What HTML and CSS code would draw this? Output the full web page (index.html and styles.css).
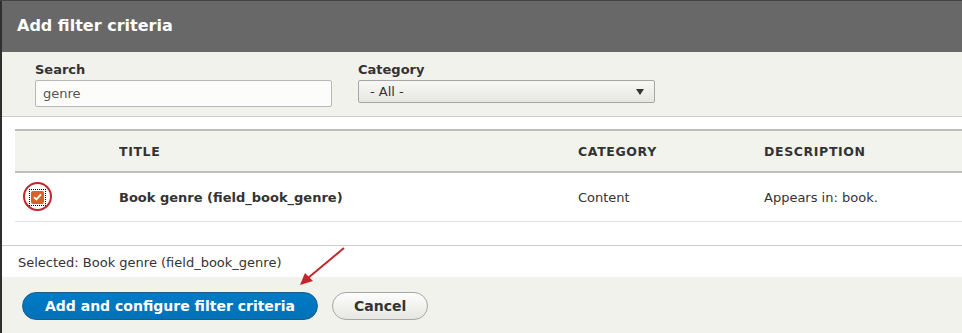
FILE: index.html
```html
<!DOCTYPE html>
<html lang="en">
<head>
    <meta charset="UTF-8">
    <title>Add filter criteria</title>
    <link rel="stylesheet" href="styles.css">
</head>
<body>
    <div class="page">
        <div class="dialog">
            <div class="dialog-title">Add filter criteria</div>

            <div class="filters">
                <div class="form-item">
                    <label for="search">Search</label>
                    <input type="text" id="search" class="form-text" value="genre">
                </div>
                <div class="form-item">
                    <label for="category">Category</label>
                    <div class="form-select">
                        <span>- All -</span>
                        <span class="caret"></span>
                    </div>
                </div>
            </div>

            <div class="results">
                <table class="views-table">
                    <thead>
                        <tr>
                            <th class="col-check"></th>
                            <th class="col-title">Title</th>
                            <th class="col-category">Category</th>
                            <th class="col-desc">Description</th>
                        </tr>
                    </thead>
                    <tbody>
                        <tr>
                            <td class="col-check">
                                <span class="focus-ring">
                                    <span class="checkbox">
                                        <svg width="9" height="8" viewBox="0 0 9 8"><path d="M1 4.2 L3.4 6.4 L8 1.3" fill="none" stroke="#fff" stroke-width="1.8"/></svg>
                                    </span>
                                </span>
                                <span class="annotation-circle"></span>
                            </td>
                            <td class="col-title"><strong>Book genre (field_book_genre)</strong></td>
                            <td class="col-category">Content</td>
                            <td class="col-desc">Appears in: book.</td>
                        </tr>
                    </tbody>
                </table>
            </div>

            <div class="selected">Selected: Book genre (field_book_genre)</div>

            <div class="button-pane">
                <button class="button button--primary">Add and configure filter criteria</button>
                <button class="button">Cancel</button>
            </div>

            <svg class="annotation-arrow" width="60" height="50" viewBox="0 0 60 50">
                <line x1="52" y1="3" x2="16" y2="33" stroke="#c1272d" stroke-width="2"/>
                <polygon points="8,40 13,28 21,36" fill="#c1272d"/>
            </svg>
        </div>
    </div>
</body>
</html>
```

FILE: styles.css
```css
body {
    margin: 0;
    font-family: "DejaVu Sans", sans-serif;
    color: #333;
    background: #2e2e2e;
    overflow: hidden;
}
.page {
    padding: 1px 0 0 2px;
    height: 332px;
    background: linear-gradient(#444 0 1px, #2e2e2e 1px);
}
.dialog {
    position: relative;
    background: #fff;
    height: 332px;
}
.dialog-title {
    background: #686868;
    color: #fff;
    font-weight: bold;
    font-size: 16px;
    height: 51px;
    line-height: 50px;
    padding-left: 15px;
}
.filters {
    display: flex;
    gap: 26px;
    background: #f2f2ed;
    padding: 10px 0 0 33px;
    height: 54px;
    border-bottom: 1px solid #ccc;
}
.form-item label {
    display: block;
    font-size: 13px;
    font-weight: bold;
    color: #333;
    margin-bottom: 3px;
}
.form-text {
    box-sizing: border-box;
    width: 297px;
    height: 27px;
    border: 1px solid #b8b8b8;
    border-radius: 2px;
    background: #fcfcfa;
    font-family: "DejaVu Sans", sans-serif;
    font-size: 13px;
    color: #555;
    padding: 0 7px;
    margin: 0;
}
.form-select {
    box-sizing: border-box;
    width: 297px;
    height: 23px;
    border: 1px solid #a6a6a6;
    border-radius: 2px;
    background: linear-gradient(#f7f7f4, #e7e7e2);
    font-size: 13px;
    color: #333;
    display: flex;
    align-items: center;
    justify-content: space-between;
    padding: 0 10px 0 11px;
}
.caret {
    width: 0;
    height: 0;
    border-left: 4px solid transparent;
    border-right: 4px solid transparent;
    border-top: 6px solid #333;
}
.results {
    padding: 12px 0 23px 13px;
    border-bottom: 1px solid #ccc;
    overflow: hidden;
}
.views-table {
    border-collapse: collapse;
    width: 1000px;
    border-top: 2px solid #bfbfba;
    font-size: 13px;
}
.views-table th {
    background: #f3f3ee;
    height: 40px;
    text-align: left;
    text-transform: uppercase;
    font-size: 12.5px;
    letter-spacing: 0.05em;
    color: #333;
    border-bottom: 2px solid #c0c0bb;
    padding: 0;
}
.views-table td {
    height: 48px;
    border-bottom: 1px solid #e2e1dc;
    padding: 0;
    color: #333;
}
.col-check {
    width: 104px;
    position: relative;
}
.col-title {
    width: 459px;
}
.col-category {
    width: 186px;
}
.focus-ring {
    display: inline-flex;
    margin-left: 14px;
    padding: 1px;
    border: 1px dotted #000;
    vertical-align: middle;
}
.checkbox {
    width: 13px;
    height: 13px;
    background: #d8612a;
    border-radius: 2px;
    display: flex;
    align-items: center;
    justify-content: center;
}
.annotation-circle {
    position: absolute;
    left: 8px;
    top: 9px;
    width: 25px;
    height: 25px;
    border: 2px solid #c1272d;
    border-radius: 50%;
}
.selected {
    font-size: 13px;
    color: #333;
    padding: 9px 16px 0;
    height: 22px;
}
.button-pane {
    background: #f2f2ed;
    padding: 15px 20px;
    display: flex;
    gap: 14px;
    height: 60px;
    box-sizing: border-box;
    align-items: flex-start;
}
.button {
    font-family: "DejaVu Sans", sans-serif;
    font-weight: bold;
    font-size: 14px;
    height: 28px;
    padding: 0 21px;
    border-radius: 20px;
    border: 1px solid #a6a6a6;
    background: linear-gradient(#fdfdfc, #e7e7e2);
    color: #333;
    white-space: nowrap;
    cursor: pointer;
}
.button--primary {
    width: 296px;
    padding: 0;
    border-color: #1e5c90;
    background: linear-gradient(#007bc6, #0071b8);
    color: #fff;
}
.annotation-arrow {
    position: absolute;
    left: 290px;
    top: 244px;
}
```
